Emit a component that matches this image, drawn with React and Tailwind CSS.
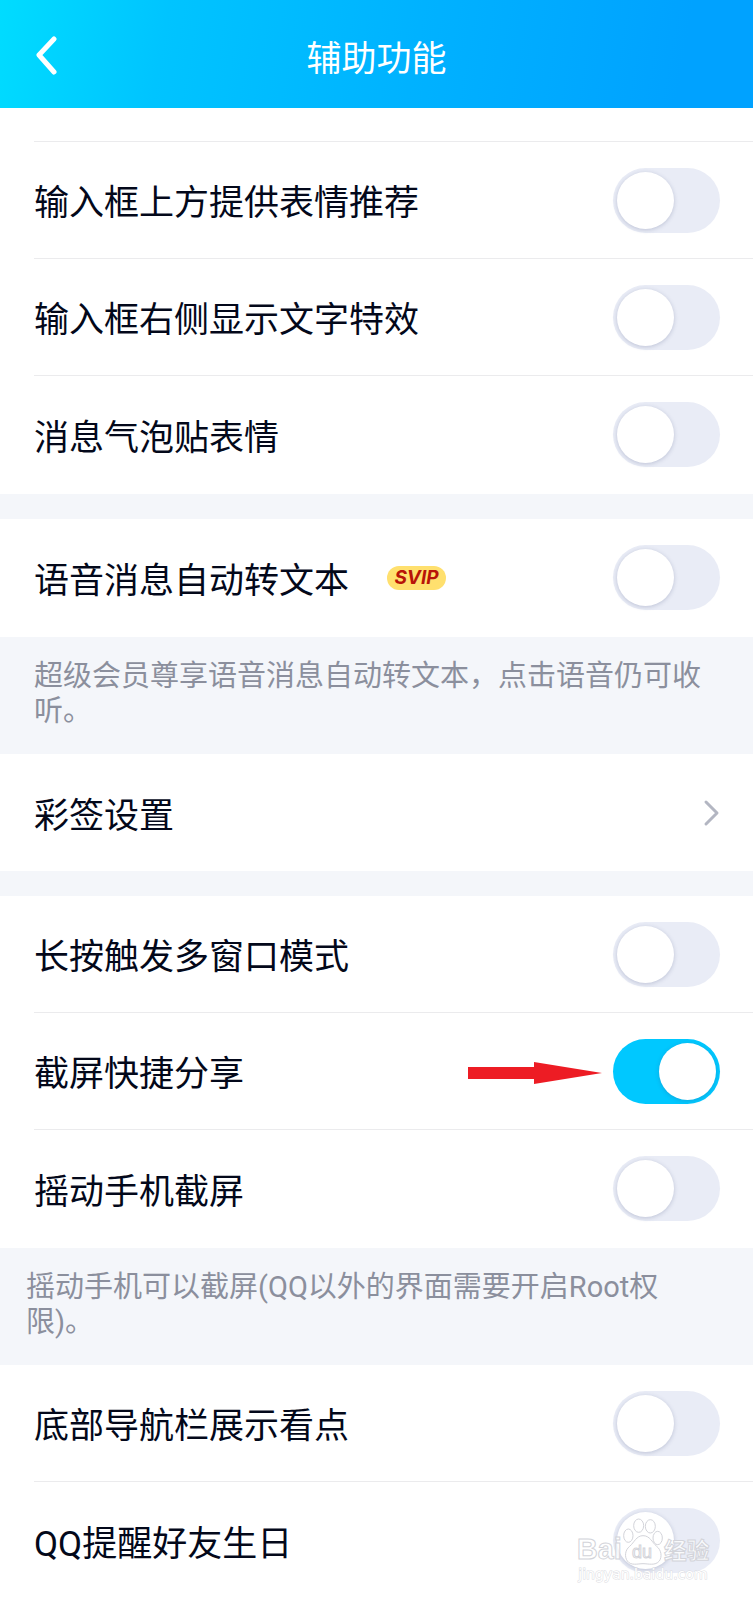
import { useState } from 'react';

const emojiSettings = [
  { id: 'emoji-suggest', label: '输入框上方提供表情推荐' },
  { id: 'text-effect', label: '输入框右侧显示文字特效' },
  { id: 'bubble-emoji', label: '消息气泡贴表情' },
];

const screenSettings = [
  { id: 'multi-window', label: '长按触发多窗口模式' },
  { id: 'quick-share', label: '截屏快捷分享', on: true, pointer: true },
  { id: 'shake-capture', label: '摇动手机截屏' },
];

const otherSettings = [
  { id: 'kandian', label: '底部导航栏展示看点' },
  { id: 'birthday', label: 'QQ提醒好友生日' },
];

function Switch({ id, on = false }) {
  const [checked, setChecked] = useState(on);

  return (
    <input
      id={id}
      type="checkbox"
      role="switch"
      checked={checked}
      onChange={(e) => setChecked(e.target.checked)}
      className="h-[65px] w-[107px] shrink-0 cursor-pointer appearance-none rounded-full bg-[#e9ecf6] p-1 before:block before:size-[57px] before:rounded-full before:bg-white before:shadow-[0_1px_4px_rgba(60,70,120,0.25)] before:content-[''] checked:bg-[#00c8ff] checked:before:ml-auto"
    />
  );
}

function RedArrow() {
  return (
    <svg className="mr-[11px] ml-auto h-[26px] w-[134px]" viewBox="0 0 134 26" aria-hidden="true">
      <path d="M0 9H66V4L134 15L66 26V21H0Z" fill="#ed1c24" />
    </svg>
  );
}

function SettingRow({ id, label, on, badge, pointer }) {
  return (
    <div className="flex h-[117px] items-center justify-between pr-[33px]">
      <div className="flex items-center gap-[38px]">
        <label htmlFor={id} className="pt-2">
          {label}
        </label>
        {badge && (
          <span className="flex h-6 w-[59px] items-center justify-center rounded-full bg-[#ffe06e] font-['Inter',sans-serif] text-[19px] font-bold text-[#b81408] italic">
            {badge}
          </span>
        )}
      </div>
      {pointer && <RedArrow />}
      <Switch id={id} on={on} />
    </div>
  );
}

function SettingGroup({ items }) {
  return (
    <section className="divide-y divide-[#ebebed] bg-white pb-px pl-[34px]">
      {items.map((item) => (
        <SettingRow key={item.id} {...item} />
      ))}
    </section>
  );
}

function Watermark() {
  return (
    <svg
      className="pointer-events-none absolute right-10 bottom-4 h-[68px] w-[138px]"
      viewBox="66 140 414 204"
      aria-hidden="true"
    >
      <g fill="#ffffff" fillOpacity="0.75" stroke="#d3d4da" strokeWidth="3">
        <text x="72" y="270" fontSize="86" fontWeight="700" fontFamily="Liberation Sans, sans-serif">
          Bai
        </text>
        <ellipse cx="226" cy="199" rx="14" ry="20" />
        <ellipse cx="257" cy="169" rx="15" ry="20" />
        <ellipse cx="292" cy="171" rx="15" ry="20" />
        <ellipse cx="314" cy="206" rx="14" ry="20" />
        <path d="M270 199C250 199 244 219 230 231C216 242 214 262 223 275C234 290 254 283 270 283C286 283 307 290 319 275C328 262 325 242 311 231C297 219 291 199 270 199Z" />
        <text x="237" y="265" fontSize="54" fontFamily="Liberation Sans, sans-serif">
          du
        </text>
        <text x="333" y="268" fontSize="68" fontWeight="700" fontFamily="Noto Sans CJK SC, sans-serif">
          经验
        </text>
      </g>
      <text
        x="76"
        y="329"
        fontSize="42"
        fontFamily="DejaVu Sans, sans-serif"
        fill="#ffffff"
        stroke="#dcdde2"
        strokeWidth="3"
        paintOrder="stroke"
      >
        jingyan.baidu.com
      </text>
    </svg>
  );
}

function App() {
  return (
    <div className="relative min-h-screen bg-white font-['Roboto','Noto_Sans_CJK_SC',sans-serif] text-[35px] leading-[40px] text-[#03081a]">
      <header className="grid h-[108px] grid-cols-[1fr_auto_1fr] items-center bg-linear-[100deg,#00dcff_0%,#00c4ff_22%,#00b2ff_55%,#00a2ff_90%] px-[34px] pt-1 text-white">
        <button type="button" aria-label="返回" className="w-6 cursor-pointer">
          <svg className="h-10 w-6" viewBox="0 0 24 40" fill="none">
            <path
              d="M20 3L5 19L20 36"
              stroke="currentColor"
              strokeWidth="5"
              strokeLinecap="round"
              strokeLinejoin="round"
            />
          </svg>
        </button>
        <h1 className="pt-2">辅助功能</h1>
      </header>

      <main>
        <div className="ml-[34px] h-[34px] border-b border-[#ebebed]" />
        <SettingGroup items={emojiSettings} />
        <div className="h-[25px] bg-[#f4f6fa]" />

        <SettingGroup items={[{ id: 'voice-text', label: '语音消息自动转文本', badge: 'SVIP' }]} />
        <p className="h-[117px] bg-[#f4f6fa] px-[34px] pt-[22px] text-[29px] leading-[35px] text-[#8b8f9d]">
          超级会员尊享语音消息自动转文本，点击语音仍可收听。
        </p>

        <a href="#signature" className="flex h-[117px] items-center justify-between pr-[33px] pl-[34px]">
          <span className="pt-2">彩签设置</span>
          <svg className="h-7 w-5" viewBox="0 0 20 28" fill="none" aria-hidden="true">
            <path d="M6 3L17 14L6 25" stroke="#b3b6c2" strokeWidth="3" strokeLinecap="round" strokeLinejoin="round" />
          </svg>
        </a>
        <div className="h-[25px] bg-[#f4f6fa]" />

        <SettingGroup items={screenSettings} />
        <p className="h-[117px] bg-[#f4f6fa] pt-[22px] pr-[34px] pl-[26px] text-[29px] leading-[35px] text-[#8b8f9d]">
          摇动手机可以截屏(QQ以外的界面需要开启Root权限)。
        </p>

        <SettingGroup items={otherSettings} />
      </main>

      <Watermark />
    </div>
  );
}

export default App;
